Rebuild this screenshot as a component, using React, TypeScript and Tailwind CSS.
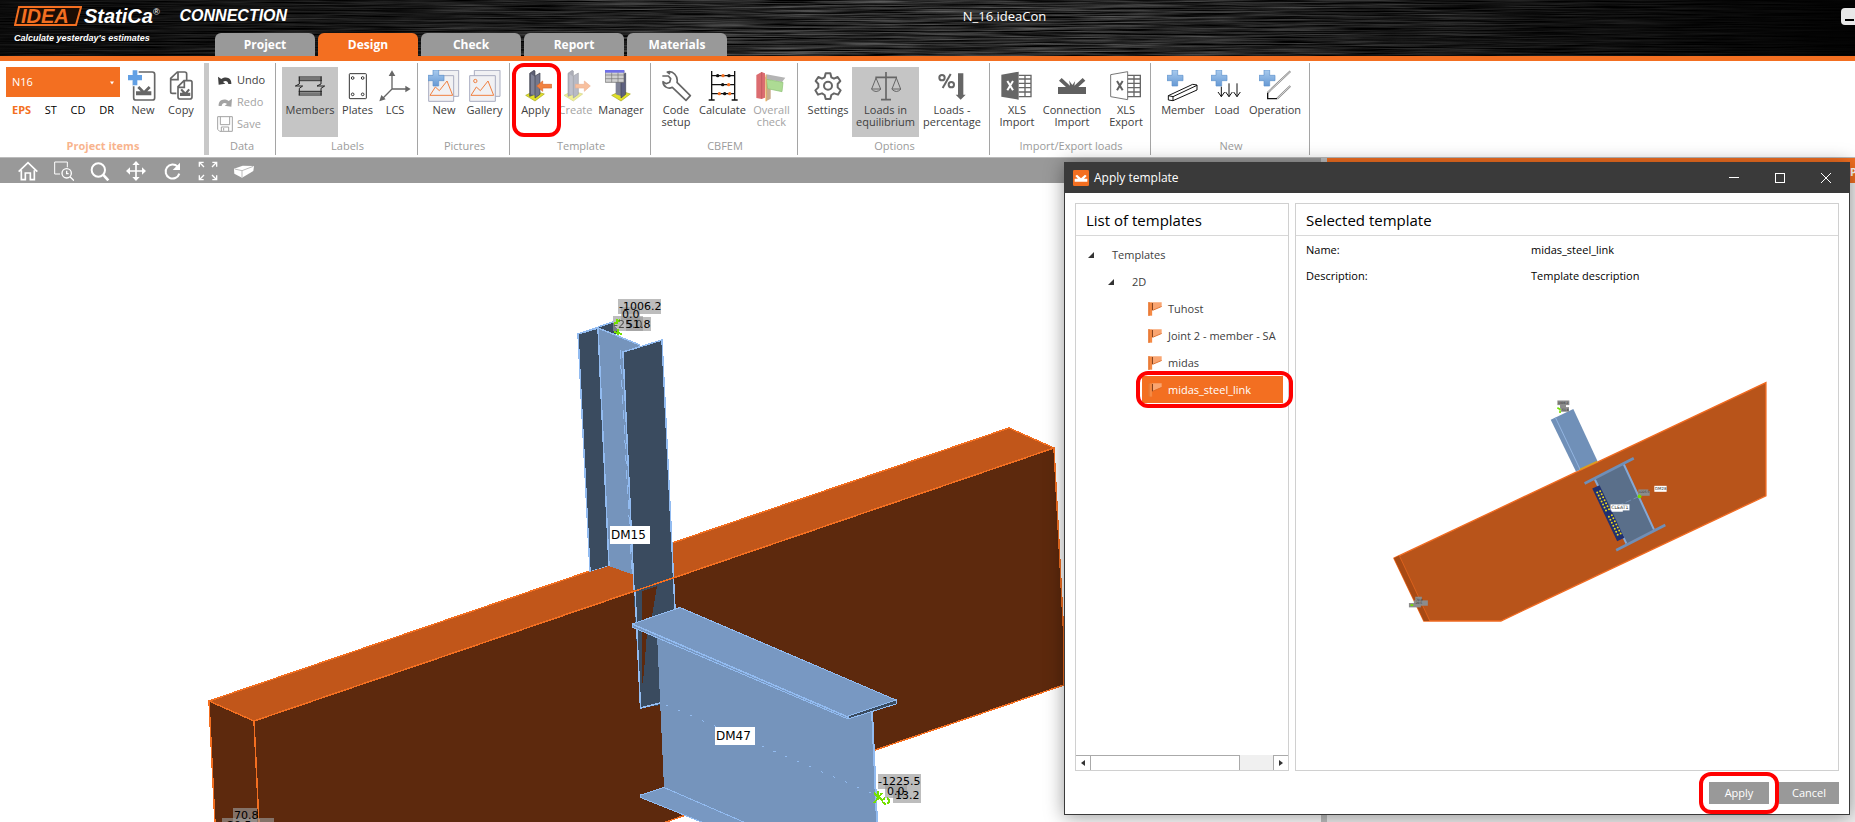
import { ReactNode, useState } from 'react';

type RibbonButtonProps = {
    label: string;
    width: string;
    children: ReactNode;
    active?: boolean;
    disabled?: boolean;
    marked?: boolean;
}

const tabs = ['Project', 'Design', 'Check', 'Report', 'Materials'];
const templates = ['Tuhost', 'Joint 2 - member - SA', 'midas', 'midas_steel_link'];

function Icon({ children }: { children: ReactNode }) {
    return (
        <svg viewBox="0 0 96 96" className="h-8 w-8 shrink-0" fill="none" aria-hidden="true">
            {children}
        </svg>
    );
}

function Plus({ x = 0 }: { x?: number }) {
    return (
        <path
            d={`M${x + 15} 0h17v16h16v16h-16v16h-17v-16h-15v-16h15z`}
            fill="url(#plusFill)" stroke="#5d92cc" strokeWidth="2"
        />
    );
}

function Column() {
    return (
        <>
            <path d="M3 76l26-13 30 9-28 21z" fill="#e0e02a" stroke="#a8a81c" strokeWidth="2" />
            <path d="M15 10l13-9 3 2v70l-16 6z" fill="#5d5f73" stroke="#40424f" strokeWidth="2" />
            <path d="M19 12l14 9v56l-14-4z" fill="#7f8296" />
            <path d="M31 18l15-9v64l-15 11z" fill="#74778c" stroke="#40424f" strokeWidth="2" />
        </>
    );
}

function RibbonButton({ label, width, children, active, disabled, marked }: RibbonButtonProps) {
    return (
        <button
            disabled={disabled}
            className={`relative flex h-[70px] flex-col items-center pt-[3px] ${width} ${active ? 'bg-[#c5c5c5]' : ''} ${disabled ? 'text-[#a3a3a3]' : 'text-[#404040]'}`}
        >
            {children}
            <span className="mt-0.5 whitespace-pre text-center leading-3">{label}</span>
            {marked && <span className="absolute -left-1 -top-1 bottom-0 z-10 w-[49px] rounded-xl border-4 border-[#f00]" />}
        </button>
    );
}

function Group({ title, children }: { title: string; children: ReactNode }) {
    return (
        <section className="flex shrink-0 flex-col border-r border-[#a5a5a5] pl-1.5 pr-1 pt-1">
            <div className="flex">{children}</div>
            <h2 className="mt-px text-center text-[#9b9b9b]">{title}</h2>
        </section>
    );
}

function Header() {
    const [tab, setTab] = useState('Design');

    return (
        <header className="relative h-[61px] shrink-0 border-b-[5px] border-[#f36f21] bg-black">
            <svg className="absolute inset-0 h-full w-full" aria-hidden="true">
                <defs>
                    <filter id="brushed" x="0" y="0" width="100%" height="100%" colorInterpolationFilters="sRGB">
                        <feTurbulence type="fractalNoise" baseFrequency="0.012 0.7" numOctaves="3" seed="7" />
                        <feColorMatrix values="0.7 0 0 0 -0.18  0.7 0 0 0 -0.18  0.7 0 0 0 -0.18  0 0 0 0 1" />
                    </filter>
                    <linearGradient id="shade">
                        <stop offset="0" stopOpacity="0.75" />
                        <stop offset="0.2" stopOpacity="0.5" />
                        <stop offset="0.42" stopOpacity="0.1" />
                        <stop offset="0.6" stopOpacity="0.1" />
                        <stop offset="0.85" stopOpacity="0.65" />
                        <stop offset="1" stopOpacity="0.95" />
                    </linearGradient>
                </defs>
                <rect width="100%" height="100%" filter="url(#brushed)" />
                <rect width="100%" height="100%" fill="url(#shade)" />
            </svg>
            <div className="relative flex h-14 items-end text-white">
                <div className="flex w-[215px] shrink-0 flex-col self-start pl-3.5 pt-1 font-['Liberation_Sans',sans-serif] font-bold italic">
                    <div className="flex items-center whitespace-nowrap">
                        <svg width="68" height="24" viewBox="0 0 68 24" className="mr-0.5 shrink-0">
                            <path d="M5 3H67L62 21H1Z" stroke="#f36f21" strokeWidth="2" fill="#1c0d04" />
                            <text x="7" y="19" fontSize="20" fontWeight="bold" fontStyle="italic" fill="#f36f21">IDEA</text>
                        </svg>
                        <span className="text-[20px] leading-6">StatiCa</span>
                        <sup className="text-[9px] font-normal">®</sup>
                        <span className="ml-5 text-[16px] leading-6">CONNECTION</span>
                    </div>
                    <p className="whitespace-nowrap text-[9px] leading-5">Calculate yesterday's estimates</p>
                </div>
                <nav className="flex gap-[3px] text-[12px] font-bold">
                    {tabs.map((name) => (
                        <button
                            key={name}
                            onClick={() => setTab(name)}
                            className={`h-[23px] w-[100px] rounded-t-md ${tab === name ? 'bg-[#f36f21]' : 'bg-[#999]'}`}
                        >
                            {name}
                        </button>
                    ))}
                </nav>
            </div>
            <h1 className="absolute inset-x-0 top-2 pl-[154px] text-center text-[13px] leading-4 text-white">N_16.ideaCon</h1>
            <button aria-label="Minimize" className="absolute right-0 top-2 h-[17px] w-[14px] rounded-l-sm bg-[#e8e8e8]">
                <span className="absolute bottom-1 right-px h-0.5 w-[9px] bg-black" />
            </button>
        </header>
    );
}

function Ribbon() {
    return (
        <div className="flex h-24 shrink-0 bg-white pb-0.5 pt-0.5 text-[11px] leading-4">
            <section className="flex shrink-0 flex-col border-r-[5px] border-[#c8c8c8] pl-1.5 pr-1 pt-1">
                <div className="flex">
                    <div className="mr-1 w-[114px]">
                        <div className="relative">
                            <select aria-label="Project item" className="h-[30px] w-full appearance-none bg-[#f36f21] px-1.5 text-white">
                                <option>N16</option>
                            </select>
                            <svg className="absolute right-1.5 top-3.5 h-1 w-1" viewBox="0 0 4 3"><path d="M0 0h4L2 3z" fill="#fff" /></svg>
                        </div>
                        <div className="flex justify-between px-1.5 pt-[5px] text-black">
                            <button className="font-bold text-[#f36f21]">EPS</button>
                            <button>ST</button>
                            <button>CD</button>
                            <button>DR</button>
                        </div>
                    </div>
                    <RibbonButton label="New" width="w-[38px]">
                        <Icon>
                            <rect x="20" y="6" width="63" height="84" rx="7" stroke="#666" strokeWidth="5" />
                            <path d="M0 12h17V-2h18v14h14v22H35v15H17V34H0z" fill="#fff" />
                            <path d="M3 15h14V1h14v14h14v16H31v15H17V31H3z" fill="#62a0e4" />
                            <path d="M27 64h14L31 54l6-6 14 14 14-14 6 6-10 10h12v12H27z" fill="#666" />
                        </Icon>
                    </RibbonButton>
                    <RibbonButton label="Copy" width="w-[38px]">
                        <Icon>
                            <path d="M34 70H22q-5 0-5-5V25L37 6h22q6 0 6 6v18M17 29h22V6" stroke="#666" strokeWidth="5" />
                            <path d="M39 50l18-18h19q5 0 5 5v44q0 6-6 6H45q-6 0-6-6zM39 52h19V32" stroke="#666" strokeWidth="5" />
                            <path d="M45 68h8l-7-8 5-4 10 11 9-11 5 4-7 8h8v10H45z" fill="#666" />
                        </Icon>
                    </RibbonButton>
                </div>
                <h2 className="mt-px text-center font-bold text-[#f8b48d]">Project items</h2>
            </section>

            <section className="flex w-[67px] shrink-0 flex-col border-r border-[#a5a5a5] pl-2 pt-1.5">
                <div className="flex h-[68px] flex-col text-[#404040]">
                    <button className="flex h-[22px] items-center gap-1">
                        <svg className="h-4 w-4" viewBox="0 0 48 48"><path d="M3 14l2 24 20-3-7-5c6-6 15-4 16 6h9c2-16-14-26-30-15z" fill="#404040" /></svg>
                        Undo
                    </button>
                    <button disabled className="flex h-[22px] items-center gap-1 text-[#a3a3a3]">
                        <svg className="h-4 w-4" viewBox="0 0 48 48"><path d="M45 14l-2 24-20-3 7-5c-6-6-15-4-16 6H5c-2-16 14-26 30-15z" fill="#a3a3a3" /></svg>
                        Redo
                    </button>
                    <button disabled className="flex h-[22px] items-center gap-1 text-[#a3a3a3]">
                        <svg className="h-4 w-4" viewBox="0 0 48 48" fill="none" stroke="#a3a3a3" strokeWidth="3"><path d="M2 2h44v44H8l-6-6zM10 2v24h28V2M13 46V33h22v13M20 36v8" /></svg>
                        Save
                    </button>
                </div>
                <h2 className="mt-px pr-2 text-center text-[#9b9b9b]">Data</h2>
            </section>

            <Group title="Labels">
                <RibbonButton label="Members" width="w-[56px]" active>
                    <Icon>
                        <path d="M14 21h70M14 32h70M14 64h70M14 75h70" stroke="#222" strokeWidth="3" />
                        <path d="M14 27h70M14 70h70" stroke="#777" strokeWidth="7" />
                        <path d="M16 20v22l-12 6h22l-10 7v21M81 20v22l-12 6h23l-11 7v21" stroke="#222" strokeWidth="3" />
                    </Icon>
                </RibbonButton>
                <RibbonButton label="Plates" width="w-[39px]">
                    <Icon>
                        <rect x="22" y="11" width="51" height="75" rx="2" stroke="#333" strokeWidth="3" />
                        <g stroke="#333" strokeWidth="3"><circle cx="32" cy="24" r="4" /><circle cx="62" cy="24" r="4" /><circle cx="32" cy="73" r="4" /><circle cx="62" cy="73" r="4" /></g>
                    </Icon>
                </RibbonButton>
                <RibbonButton label="LCS" width="w-[36px]">
                    <Icon>
                        <path d="M39 10v47h46M39 57L10 86" stroke="#666" strokeWidth="4" />
                        <path d="M39 1l10 17H29zM95 57L79 67V47zM1 94l6-19 13 13z" fill="#666" />
                    </Icon>
                </RibbonButton>
            </Group>

            <Group title="Pictures">
                <RibbonButton label="New" width="w-[40px]">
                    <Icon>
                        <path d="M18 1h74v78H18z" fill="#f1f1f3" stroke="#a9adc0" strokeWidth="3" />
                        <path d="M2 17h75v77H2z" fill="#f1f1f3" stroke="#a9adc0" strokeWidth="3" />
                        <path d="M6 76l16-25 12 11 23-29 17 43z" stroke="#f08040" strokeWidth="3" />
                        <Plus />
                    </Icon>
                </RibbonButton>
                <RibbonButton label="Gallery" width="w-[41px]">
                    <Icon>
                        <path d="M16 1h77v78H16z" fill="#f1f1f3" stroke="#a9adc0" strokeWidth="3" />
                        <path d="M2 17h77v77H2z" fill="#f1f1f3" stroke="#a9adc0" strokeWidth="3" />
                        <path d="M6 76l16-25 12 11 23-29 17 43z" stroke="#f08040" strokeWidth="3" />
                        <circle cx="19" cy="33" r="5" stroke="#f08040" strokeWidth="3" />
                    </Icon>
                </RibbonButton>
            </Group>

            <Group title="Template">
                <RibbonButton label="Apply" width="w-[39px]" marked>
                    <Icon>
                        <g transform="translate(14)">
                            <Column />
                            <path d="M36 48l18-15v10h27v11H54v10z" fill="#f2823f" stroke="#d9662a" strokeWidth="2" />
                        </g>
                    </Icon>
                </RibbonButton>
                <RibbonButton label="Create" width="w-[41px]" disabled>
                    <Icon>
                        <g opacity="0.5" transform="translate(9)">
                            <Column />
                            <path d="M82 48L64 33v10H37v11h27v10z" fill="#f2823f" stroke="#d9662a" strokeWidth="2" />
                        </g>
                    </Icon>
                </RibbonButton>
                <RibbonButton label="Manager" width="w-[50px]">
                    <Icon>
                        <path d="M20 76l28-13 28 9-28 21z" fill="#e0e02a" stroke="#a8a81c" strokeWidth="2" />
                        <path d="M32 28h16v50l-16-5z" fill="#7f8296" />
                        <path d="M48 18l14-9v64l-14 11z" fill="#5d6080" stroke="#40424f" strokeWidth="2" />
                        <path d="M1 2h56v35H1z" fill="#cfcfcf" stroke="#666" strokeWidth="2" />
                        <path d="M1 15h56M1 26h56M20 7v30M39 7v30" stroke="#777" strokeWidth="2" />
                        <path d="M0 0h58v8H0z" fill="#6f6fe8" />
                    </Icon>
                </RibbonButton>
            </Group>

            <Group title="CBFEM">
                <RibbonButton label={'Code\nsetup'} width="w-[38px]">
                    <Icon>
                        <path d="M7 18l18 0 7 8-3 11-11 4-9-6c0 14 15 24 28 17l41 39 13-14-40-40C55 19 39 1 22 6l8 6" stroke="#666" strokeWidth="5" strokeLinejoin="round" />
                    </Icon>
                </RibbonButton>
                <RibbonButton label="Calculate" width="w-[55px]">
                    <Icon>
                        <path d="M14 3v87M83 3v87M14 17h69M14 44h69M14 71h69M5 90h18M74 90h18" stroke="#111" strokeWidth="4" />
                        <g fill="#111"><circle cx="32" cy="17" r="5" /><circle cx="66" cy="17" r="5" /><circle cx="47" cy="44" r="5" /><circle cx="53" cy="71" r="5" /></g>
                        <g fill="#f36f21"><circle cx="48" cy="17" r="5" /><circle cx="65" cy="44" r="5" /><circle cx="37" cy="71" r="5" /><circle cx="68" cy="71" r="5" /></g>
                    </Icon>
                </RibbonButton>
                <RibbonButton label={'Overall\ncheck'} width="w-[43px]" disabled>
                    <Icon>
                        <path d="M1 15l16-9 10 4v73l-10 4-16-3z" fill="#dc6c70" />
                        <path d="M17 6v80" stroke="#b85358" strokeWidth="2" />
                        <path d="M28 20l16 9v57l-14 8z" fill="#c9a98c" />
                        <path d="M31 13l57 10-10 13-50-9z" fill="#b4b4b4" />
                        <path d="M31 28l50 9-3 28-43-9z" fill="#addb94" stroke="#8cbf74" strokeWidth="2" />
                        <path d="M30 14v80" stroke="#f0b050" strokeWidth="3" />
                    </Icon>
                </RibbonButton>
            </Group>

            <Group title="Options">
                <RibbonButton label="Settings" width="w-[48px]">
                    <Icon>
                        <path d="M41 10h14l3 12 8 4 11-5 8 12-8 9v10l9 9-8 13-12-4-8 5-3 12H41l-3-12-8-5-12 4-8-13 9-9V42l-8-9 8-12 11 5 8-4z" stroke="#666" strokeWidth="6" strokeLinejoin="round" />
                        <circle cx="48" cy="47" r="12" stroke="#666" strokeWidth="6" />
                    </Icon>
                </RibbonButton>
                <RibbonButton label={'Loads in\nequilibrium'} width="w-[67px]" active>
                    <Icon>
                        <path d="M48 6v83M16 22h65M33 89h30" stroke="#666" strokeWidth="5" />
                        <path d="M18 24L5 57h27L18 24M79 24L66 57h26L79 24M4 57q14 15 29 0M65 57q14 15 28 0" stroke="#666" strokeWidth="3" />
                    </Icon>
                </RibbonButton>
                <RibbonButton label={'Loads -\npercentage'} width="w-[66px]">
                    <Icon>
                        <circle cx="18" cy="23" r="8" stroke="#666" strokeWidth="6" />
                        <circle cx="46" cy="44" r="8" stroke="#666" strokeWidth="6" />
                        <path d="M44 12L20 54" stroke="#666" strokeWidth="6" />
                        <path d="M66 10h16v64h7L74 89 59 74h7z" fill="#666" />
                    </Icon>
                </RibbonButton>
            </Group>

            <Group title="Import/Export loads">
                <RibbonButton label={'XLS\nImport'} width="w-[42px]">
                    <Icon>
                        <path d="M1 14l52-9v84L1 80z" fill="#666" />
                        <path d="M53 16h37v64H53M53 27h37M53 40h37M53 53h37M53 66h37M72 16v64" stroke="#666" strokeWidth="4" />
                        <path d="M19 33l17 28M36 33L19 61" stroke="#fff" strokeWidth="6" />
                    </Icon>
                </RibbonButton>
                <RibbonButton label={'Connection\nImport'} width="w-[68px]">
                    <Icon>
                        <path d="M6 51h24L9 32l8-8 25 23-3-18h19l-3 18 25-23 8 8-21 19h23v21H6z" fill="#606060" />
                        <path d="M32 22h34L49 45z" fill="#fff" />
                    </Icon>
                </RibbonButton>
                <RibbonButton label={'XLS\nExport'} width="w-[40px]">
                    <Icon>
                        <path d="M2 14l51-9v84L2 80z" stroke="#777" strokeWidth="3" />
                        <path d="M53 16h38v64H53M53 27h38M53 40h38M53 53h38M53 66h38M72 16v64" stroke="#666" strokeWidth="4" />
                        <path d="M21 33l17 28M38 33L21 61" stroke="#606060" strokeWidth="6" />
                    </Icon>
                </RibbonButton>
            </Group>

            <Group title="New">
                <RibbonButton label="Member" width="w-[52px]">
                    <Icon>
                        <Plus />
                        <path d="M4 77l14 3v12L4 90zM4 77l73-34 13 2v15L18 92M18 80l72-34" stroke="#111" strokeWidth="3" />
                    </Icon>
                </RibbonButton>
                <RibbonButton label="Load" width="w-[36px]">
                    <Icon>
                        <Plus />
                        <path d="M31 50v30M54 40v40M78 40v40M21 66l10 14 10-14M44 66l10 14 10-14M68 66l10 14 10-14" stroke="#111" strokeWidth="3" />
                    </Icon>
                </RibbonButton>
                <RibbonButton label="Operation" width="w-[60px]">
                    <Icon>
                        <Plus />
                        <path d="M26 68L94 4M54 86L94 48" stroke="#888" strokeWidth="6" />
                        <path d="M26 68L94 4M54 86L94 48" stroke="#fff" strokeWidth="2" />
                        <path d="M26 68v18h28" stroke="#111" strokeWidth="4" />
                    </Icon>
                </RibbonButton>
            </Group>
        </div>
    );
}

const viewTools: { name: string; drawing: ReactNode }[] = [
    { name: 'Home', drawing: <path d="M2 32L30 5l28 27M10 28v28h12V36h15v20h12V28" strokeWidth="5" /> },
    { name: 'Zoom window', drawing: <><path d="M18 39H2V3h38v16" strokeWidth="3" /><circle cx="38" cy="37" r="14" strokeWidth="4" /><path d="M48 47l12 12M38 29v9h6" strokeWidth="4" /></> },
    { name: 'Zoom', drawing: <><circle cx="25" cy="27" r="20" strokeWidth="6" /><path d="M39 41l16 17" strokeWidth="8" /></> },
    { name: 'Pan', drawing: <><path d="M30 8v44M8 30h44" strokeWidth="5" /><path d="M30 0l11 12H19zM30 60l11-12H19zM0 30l12-11v22zM60 30L48 19v22z" fill="#fff" stroke="none" /></> },
    { name: 'Rotate', drawing: <><path d="M47 17a21 21 0 1 0 5 21" strokeWidth="6" /><path d="M54 5v22H32z" fill="#fff" stroke="none" /></> },
    { name: 'Fit', drawing: <path d="M4 17V4h13M4 4l14 14M43 4h13v13M56 4L42 18M4 43v13h13M4 56l14-14M43 56h13V43M56 56L42 42" strokeWidth="4" /> },
    { name: 'Perspective', drawing: <><path d="M0 23l26-9 34 1-2 15-34 20L1 38z" fill="#fff" stroke="none" /><path d="M2 24l22 5 34-13M24 29v20" stroke="#bbb" strokeWidth="3" /></> },
];

function Scene() {
    return (
        <svg viewBox="0 183 1321 639" preserveAspectRatio="xMinYMin slice" className="min-h-0 w-full flex-1 font-['DejaVu_Sans',sans-serif]" fontSize="12" shapeRendering="crispEdges" role="img" aria-label="Connection model">
            {/* orange beam */}
            <g stroke="#f36f21" strokeWidth="1.5">
                <path d="M209 701L1009 428l45 20-800 273z" fill="#c1561a" />
                <path d="M254 721l800-273 10 192v45L660 824H258.500z" fill="#5d290d" />
                <path d="M209 701l45 20 5 103h-44z" fill="#5d290d" />
            </g>
            {/* column DM15 */}
            <g stroke="#92bbf0" strokeWidth="1.5">
                <path d="M598 328l15-6 6 11-8 3z" fill="#3a4b5f" stroke="none" />
                <path d="M578 334l20-6 11 238-19 6z" fill="#3a4b5f" />
                <path d="M578 334l35-12" />
                <path d="M598 328l42 17 5 234-36-13z" fill="#7594bc" stroke="none" />
                <path d="M598 328l42 17M598 328l11 238" fill="none" />
                <path d="M620 350l12 222" strokeDasharray="9 6" strokeWidth="1" />
                <path d="M589 572l20-6 25 10v14L592 604z" fill="#c1561a" stroke="none" />
                <path d="M623 352l39-12 13 269v94l-34.500 5-7-118z" fill="#3a4b5f" stroke="none" />
                <path d="M660 703l15-2v-92l-15 6z" fill="#5d290d" stroke="none" />
                <path d="M634 590L623 352l39-12 13 269M635 590l5.500 118 20-5" fill="none" />
                <path d="M642 591l15-5-6 36-4 10-3 40-2 15z" fill="#5d290d" stroke="none" />
            </g>
            <path d="M560 616.500L680 575.600" stroke="#f36f21" strokeWidth="1.500" />
            {/* beam DM47 */}
            <g stroke="#92bbf0" strokeWidth="1">
                <path d="M657 634L872 710l5 112H745L664 788z" fill="#7594bc" stroke="none" />
                <path d="M872 710l5 112" strokeWidth="2" />
                <path d="M632 624l48-16.500 216 92.500v4l-48 15L632 627z" fill="#7898c2" />
                <path d="M848 716l48-16v4l-48 15z" fill="#3a4b5f" />
                <path d="M632 624L848 717" strokeWidth="1.5" />
                <path d="M640.500 795l23.500-7.500 82 35.500h-42l-63.500-25.500z" fill="#7898c2" />
                <path d="M666 705l210 90" strokeDasharray="2 11" />
            </g>
            <g fill="#9a9a9a" fillOpacity="0.65">
                <rect x="618" y="299" width="43" height="15" />
                <rect x="621" y="307" width="19" height="13" />
                <rect x="613" y="316" width="30" height="15" />
                <rect x="626" y="317" width="25" height="14" />
                <rect x="878" y="774" width="43" height="15" />
                <rect x="885" y="784" width="22" height="14" />
                <rect x="893" y="789" width="28" height="14" />
                <rect x="233" y="808" width="24" height="14" />
                <rect x="222" y="818" width="52" height="4" />
            </g>
            <g stroke="#74e000" strokeWidth="2" fill="none">
                <path d="M614 324l6-4M617 319v5M614 332l8 2M618 329v6" />
                <path d="M874 793l9 8M882 793l-8 10M878 791v9" />
                <circle cx="886" cy="801" r="3" fill="#fff" strokeDasharray="3 2" />
            </g>
            <g fill="#fff"><rect x="610" y="526" width="40" height="18" /><rect x="715" y="727" width="40" height="18" /></g>
            <g fill="#000">
                <text x="611" y="539">DM15</text>
                <text x="716" y="740">DM47</text>
                <g fontSize="11">
                    <text x="619" y="310">-1006.2</text>
                    <text x="622" y="318">0.0</text>
                    <text x="614" y="328" opacity="0.6">-25.0</text>
                    <text x="626" y="328">51.8</text>
                    <text x="878" y="785">-1225.5</text>
                    <text x="887" y="795">0.0</text>
                    <text x="895" y="799">13.2</text>
                    <text x="234" y="819">70.8</text>
                    <text x="223" y="829">-20.5</text>
                </g>
            </g>
        </svg>
    );
}

function TemplatePreview() {
    const bolts = [0, 1, 2, 3, 4, 5, 6, 7, 8, 9, 10, 11, 12, 13, 14].filter((i) => i !== 7);

    return (
        <svg viewBox="-255 -232 1632 1410" className="min-h-0 w-full flex-1" role="img" aria-label="Template preview">
            <path d="M40 567L1160 38v341L362 756H130z" fill="#b8541a" stroke="#f06a20" strokeWidth="4" />
            <path d="M40 567l16-8 92 197h-18z" fill="#a84a14" />
            <path d="M56 559l92 197" stroke="#f06a20" strokeWidth="2" />
            <path d="M512 150l68-32 73 157-65 31z" fill="#7090b8" />
            <path d="M526 143l75 158" stroke="#92b4e0" strokeWidth="3" />
            <path d="M600 300l52-24" stroke="#d8a020" strokeWidth="5" />
            <path d="M645 330l87-46 91 197-83 42z" fill="#5a6f8a" />
            <path d="M732 284l91 197M645 330l95 193" stroke="#86a8d4" strokeWidth="6" />
            <path d="M614 342l148-76M709 543l148-76" stroke="#6f8fb8" strokeWidth="8" />
            <path d="M690 420l95-42" stroke="#7f9cc4" strokeWidth="2" strokeDasharray="18 8" />
            <path d="M637 357l22-10 75 158-22 11z" fill="#203070" />
            {bolts.map((i) => (
                <g key={i} fill="#e8d820">
                    <circle cx={652 + i * 4.4} cy={369 + i * 9.1} r="3" />
                    <circle cx={661 + i * 4.4} cy={365 + i * 9.1} r="3" />
                </g>
            ))}
            <g fill="#8c8c8c">
                <rect x="532" y="92" width="36" height="14" /><rect x="540" y="103" width="18" height="14" /><rect x="543" y="112" width="24" height="14" />
                <rect x="776" y="360" width="30" height="17" /><rect x="784" y="365" width="26" height="14" />
                <rect x="104" y="683" width="20" height="16" /><rect x="100" y="694" width="42" height="16" /><rect x="85" y="702" width="36" height="13" />
            </g>
            <g stroke="#74e000" strokeWidth="5"><path d="M532 114l10 6M540 122v8M776 382h9M90 708h8" /><circle cx="779" cy="381" r="3" /></g>
            <g fill="#fff"><rect x="692" y="405" width="57" height="18" /><rect x="695" y="418" width="34" height="9" /><rect x="824" y="349" width="37" height="18" /></g>
            <g fontSize="14" fill="#333" fontFamily="DejaVu Sans">
                <text x="694" y="419">CLEAT1</text>
                <text x="826" y="363" fontSize="12">DM28</text>
                <text x="534" y="103" fontSize="9">1006.2</text>
                <text x="546" y="123" fontSize="9">51.8</text>
                <text x="778" y="371" fontSize="9">1225.5</text>
                <text x="106" y="695" fontSize="9">70.8</text>
                <text x="102" y="706" fontSize="9">-20.5</text>
            </g>
        </svg>
    );
}

function ApplyDialog() {
    const [selected, setSelected] = useState('midas_steel_link');

    return (
        <div role="dialog" aria-label="Apply template" className="absolute bottom-[7px] right-[5px] top-[162px] flex w-[786px] flex-col border border-t-0 border-[#3a3a3a] bg-white text-[11px] leading-4 shadow-[0_2px_18px_rgba(0,0,0,0.4)]">
            <div className="flex h-[31px] shrink-0 items-center bg-[#3a3a3a] pl-2 text-white">
                <svg viewBox="0 0 48 48" className="mr-[5px] h-4 w-4"><rect width="48" height="48" rx="4" fill="#f36f21" /><path d="M5 26h10l-8-8 5-4 12 11 12-11 5 4-8 8h10v9H5z" fill="#fff" /></svg>
                <h2 className="flex-1 text-[12px]">Apply template</h2>
                <button aria-label="Minimize" className="flex h-full w-[46px] items-center justify-center"><span className="h-px w-2.5 bg-white" /></button>
                <button aria-label="Maximize" className="flex h-full w-[46px] items-center justify-center"><span className="h-2.5 w-2.5 border border-white" /></button>
                <button aria-label="Close" className="flex h-full w-[46px] items-center justify-center">
                    <svg viewBox="0 0 10 10" className="h-2.5 w-2.5"><path d="M0 0l10 10M10 0L0 10" stroke="#fff" /></svg>
                </button>
            </div>
            <div className="flex min-h-0 flex-1 gap-1.5 px-2.5 pt-2.5">
                <section className="flex w-[214px] shrink-0 flex-col border border-[#d0d0d0]">
                    <h3 className="h-8 shrink-0 border-b border-[#d8d8d8] pl-2.5 text-[15px] leading-8 text-black">List of templates</h3>
                    <div className="flex-1 pt-[5px] text-[#404040]">
                        <button className="flex h-[27px] items-center pl-3">
                            <svg viewBox="0 0 6 6" className="mr-[18px] h-1.5 w-1.5"><path d="M6 0v6H0z" fill="#333" /></svg>
                            Templates
                        </button>
                        <button className="flex h-[27px] items-center pl-8">
                            <svg viewBox="0 0 6 6" className="mr-[18px] h-1.5 w-1.5"><path d="M6 0v6H0z" fill="#333" /></svg>
                            2D
                        </button>
                        {templates.map((name) => (
                            <div key={name} className="relative pl-[66px] pr-[5px]">
                                <button
                                    onClick={() => setSelected(name)}
                                    className={`flex h-[27px] w-full items-center gap-1.5 whitespace-nowrap pl-1.5 ${selected === name ? 'bg-[#f36f21] text-white' : ''}`}
                                >
                                    <svg viewBox="0 0 42 44" className="h-[14px] w-[14px] shrink-0">
                                        <path d="M0 1h12v42H0z" fill="#f58a45" />
                                        <path d="M12 1h30v12L12 26z" fill="#f9a571" />
                                        <path d="M2 0v44M14 26l28-12" stroke="#e06a24" strokeWidth="3" />
                                        <path d="M13 3v23" stroke="#7a3a16" strokeWidth="3" />
                                    </svg>
                                    {name}
                                </button>
                                {selected === name && <span className="pointer-events-none absolute -inset-y-[5px] -right-[5px] left-[60px] rounded-xl border-4 border-[#f00]" />}
                            </div>
                        ))}
                    </div>
                    <div className="flex h-[15px] bg-[#f0f0f0]">
                        <button aria-label="Scroll left" className="flex w-[15px] items-center justify-center border-r border-t border-[#aaa] bg-white">
                            <svg viewBox="0 0 4 6" className="h-1.5 w-1"><path d="M4 0v6L0 3z" fill="#333" /></svg>
                        </button>
                        <div className="w-[149px] border-r border-t border-[#aaa] bg-white" />
                        <button aria-label="Scroll right" className="ml-auto flex w-[15px] items-center justify-center border-l border-t border-[#aaa] bg-white">
                            <svg viewBox="0 0 4 6" className="h-1.5 w-1"><path d="M0 0v6l4-3z" fill="#333" /></svg>
                        </button>
                    </div>
                </section>
                <section className="flex min-w-0 flex-1 flex-col border border-[#d0d0d0]">
                    <h3 className="h-8 shrink-0 border-b border-[#d8d8d8] pl-2.5 text-[15px] leading-8 text-black">Selected template</h3>
                    <dl className="grid shrink-0 grid-cols-[225px_1fr] gap-y-2.5 pl-2.5 pt-1.5 text-black">
                        <dt>Name:</dt><dd>{selected}</dd>
                        <dt>Description:</dt><dd>Template description</dd>
                    </dl>
                    <TemplatePreview />
                </section>
            </div>
            <div className="flex h-[43px] shrink-0 justify-end gap-2.5 px-2.5 pt-[11px] text-white">
                <button className="relative h-[22px] w-[60px] bg-[#999]">
                    Apply
                    <span className="absolute -inset-2.5 rounded-xl border-4 border-[#f00]" />
                </button>
                <button className="h-[22px] w-[60px] bg-[#999]">Cancel</button>
            </div>
        </div>
    );
}

export default function App() {
    return (
        <div className="relative flex h-screen flex-col overflow-hidden bg-white font-['Open_Sans','Noto_Sans',sans-serif]">
            <svg className="absolute h-0 w-0" aria-hidden="true">
                <linearGradient id="plusFill" x2="0" y2="1">
                    <stop stopColor="#a9cbee" />
                    <stop offset="1" stopColor="#6699d4" />
                </linearGradient>
            </svg>
            <Header />
            <Ribbon />
            <main className="flex min-h-0 flex-1 border-t border-[#bbb]">
                <div className="flex min-w-0 flex-1 flex-col">
                    <div className="flex h-[25px] shrink-0 items-center gap-4 bg-[#999] pl-[18px] pt-px">
                        {viewTools.map((tool) => (
                            <button key={tool.name} aria-label={tool.name}>
                                <svg viewBox="0 0 60 60" className="h-5 w-5" fill="none" stroke="#fff">{tool.drawing}</svg>
                            </button>
                        ))}
                    </div>
                    <Scene />
                </div>
                <div className="w-1.5 bg-[#c0c0c0]" />
                <aside className="w-[528px] bg-[#f0f0f0]">
                    <div className="flex h-[25px] justify-end bg-[#f36f21] text-[11px] font-bold leading-7 text-white">
                        <span className="w-[5px]">P</span>
                    </div>
                </aside>
            </main>
            <ApplyDialog />
        </div>
    );
}
